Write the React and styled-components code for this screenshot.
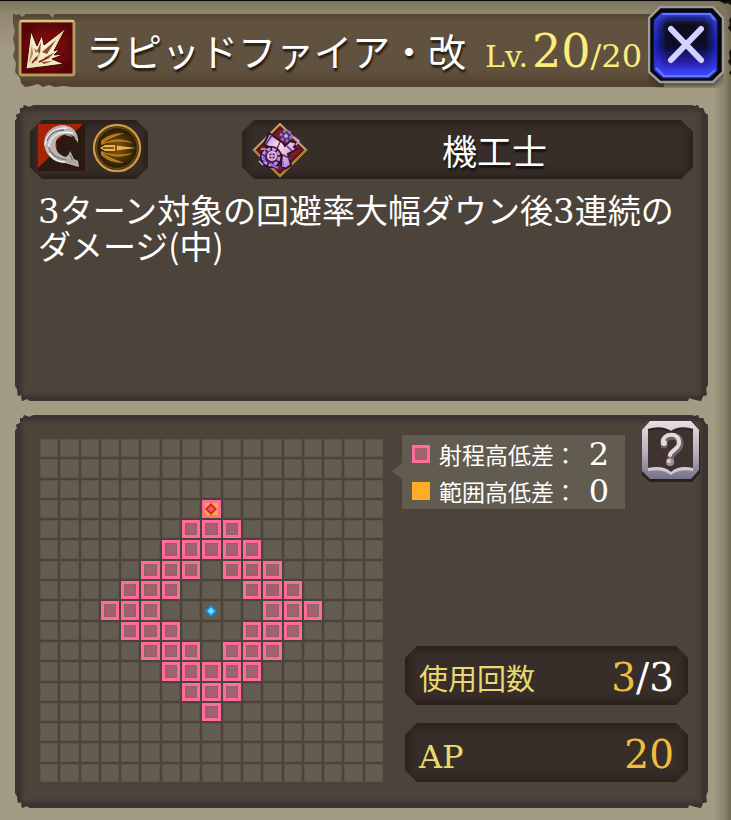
import styled, { createGlobalStyle } from "styled-components";

const GlobalStyle = createGlobalStyle`
  * {
    box-sizing: border-box;
  }
  body {
    margin: 0;
    background-color: #a39b83;
    font-family: "DejaVu Serif", "Noto Sans CJK JP", serif;
    color: #ffffff;
  }
  h1, h2, p, dl, dt, dd, ul {
    margin: 0;
    padding: 0;
    font-weight: normal;
  }
`;

const Page = styled.main`
  position: relative;
  display: flex;
  flex-direction: column;
  min-height: 100vh;
  padding-bottom: 12px;
  border-top: 1px solid #08070a;
  background: linear-gradient(
      to left,
      #6e664e 0,
      rgba(110, 102, 78, 0.4) 7px,
      transparent 18px
    ),
    linear-gradient(#7b725c 0, #918871 13px, #a39b83 50px);
`;

const TornEdge = styled.svg`
  position: absolute;
  top: 0;
  right: 0;
  width: 18px;
  height: 80px;
`;

const Header = styled.header`
  position: relative;
  display: flex;
  align-items: flex-start;
  padding: 5px 7px 0 13px;
  height: 104px;
`;

const TitleBar = styled.div`
  flex: 1;
  display: flex;
  align-items: center;
  height: 73px;
  margin-top: 8px;
  padding: 0 22px 6px 4px;
  background: linear-gradient(#53452f 0, #60523f 9px, #60523f 56px, #503f29 100%);
  clip-path: polygon(
    0 0, 4px 1px, 6px 0, 9px 3px, 13px 0, 36px 0, 40px 4px, 41px 0, 100% 0,
    100% 100%, 60px 100%, 50px 72px, 42px 73px, 36px 71px, 30px 73px, 25px 70px,
    18px 72px, 12px 73px, 8px 69px, 7px 64px, 2px 58px, 3px 49px, 0 42px,
    2px 34px, 0 25px, 2px 17px, 0 10px
  );
`;

const SkillIcon = styled.svg`
  flex: none;
  width: 60px;
  height: 60px;
`;

const SkillName = styled.h1`
  margin-left: 9px;
  padding-top: 4px;
  font-family: "Noto Sans CJK JP", sans-serif;
  font-size: 38px;
  line-height: 56px;
  white-space: nowrap;
  text-shadow: 1px 3px 2px #241c12;
`;

const Level = styled.p`
  margin-left: auto;
  padding-top: 12px;
  display: flex;
  align-items: baseline;
  font-size: 30px;
  line-height: 56px;
  color: #fdec7c;
  white-space: nowrap;
`;

const LevelNow = styled.strong`
  margin-left: 4px;
  font-size: 46px;
  font-weight: normal;
`;

const LevelMax = styled.span`
  font-size: 32px;
`;

const IconButton = styled.button`
  flex: none;
  width: ${(props) => props.$size}px;
  padding: 0;
  border: none;
  background: none;
  cursor: pointer;
  svg {
    display: block;
    width: 100%;
  }
`;

const CloseButton = styled(IconButton)`
  position: relative;
  margin-left: -16px;
`;

const Panel = styled.section`
  margin: 0 23px 14px 15px;
  background-color: #4c433a;
  box-shadow: inset 0 0 5px 3px #352f2d;
  border: solid #403336;
  border-width: 2px 3px;
  clip-path: polygon(
    0 16px, 2px 13px, 1px 10px, 5px 8px, 5px 3px, 8px 3px, 9px 0, 14px 2px, 19px 0,
    calc(100% - 18px) 0, calc(100% - 13px) 1px, calc(100% - 10px) 0,
    calc(100% - 9px) 3px, calc(100% - 5px) 3px, calc(100% - 3px) 8px, 100% 10px,
    100% calc(100% - 17px), calc(100% - 2px) calc(100% - 12px),
    calc(100% - 1px) calc(100% - 6px), calc(100% - 5px) calc(100% - 5px),
    calc(100% - 7px) 100%, calc(100% - 12px) calc(100% - 1px),
    calc(100% - 19px) calc(100% - 3px), calc(100% - 20px) 100%,
    15px 100%, 12px calc(100% - 2px), 7px 100%, 6px calc(100% - 6px),
    3px calc(100% - 5px), 2px calc(100% - 12px), 0 calc(100% - 15px)
  );
`;

const DetailPanel = styled(Panel)`
  min-height: 296px;
  padding: 13px 12px;
`;

const RangePanel = styled(Panel)`
  display: grid;
  grid-template-columns: minmax(0, 343fr) minmax(0, 299fr);
  column-gap: 19px;
  padding: 4px 4px 24px 22px;
  margin-bottom: 0;
`;

const PlateRow = styled.div`
  display: flex;
  justify-content: space-between;
`;

const Plate = styled.div`
  display: flex;
  align-items: center;
  height: 59px;
  background-color: #372e2a;
  box-shadow: inset 0 0 10px 3px #281d17;
  clip-path: polygon(
    12px 0, calc(100% - 12px) 0, 100% 12px, 100% calc(100% - 12px),
    calc(100% - 12px) 100%, 12px 100%, 0 calc(100% - 12px), 0 12px
  );
`;

const TypePlate = styled(Plate)`
  width: 118px;
  padding: 0 5px 4px 8px;
  justify-content: space-between;
`;

const JobPlate = styled(Plate)`
  width: 68%;
  padding-left: 10px;
`;

const JobName = styled.h2`
  flex: 1;
  padding-right: 12px;
  font-family: "Noto Sans CJK JP", sans-serif;
  font-size: 35px;
  line-height: 56px;
  text-align: center;
  text-shadow: 1px 3px 2px #15100d;
`;

const Description = styled.p`
  padding: 13px 0 0 8px;
  font-family: "Noto Sans CJK JP", sans-serif;
  font-size: 33px;
  line-height: 34px;
`;

const Digit = styled.span`
  font-family: "DejaVu Serif", serif;
  font-size: 34px;
  line-height: 34px;
`;

const RangeMap = styled.div`
  display: grid;
  grid-template-columns: repeat(17, minmax(0, 1fr));
  gap: 2px;
  align-content: start;
  padding-top: 18px;
`;

const cellFill = {
  none: "#635c50",
  range: "#a2616c",
  target: "#ffae24",
};

const Cell = styled.div`
  display: flex;
  align-items: center;
  justify-content: center;
  aspect-ratio: 1;
  background-color: ${(props) => cellFill[props.$kind]};
  border: ${(props) =>
    props.$kind === "none" ? "1px solid #5b5449" : "3px solid #ff6c9b"};
  box-shadow: ${(props) =>
    props.$kind === "range" ? "inset 0 0 0 1px #8b6464" : "none"};
  svg {
    flex: none;
    width: 12px;
    height: 12px;
  }
`;

const SideColumn = styled.div`
  display: flex;
  flex-direction: column;
  justify-content: space-between;
`;

const SideTop = styled.div`
  display: flex;
  justify-content: space-between;
  align-items: flex-start;
`;

const Legend = styled.ul`
  position: relative;
  width: 223px;
  margin-top: 14px;
  list-style: none;
  background-color: #625b4f;
  &::before {
    content: "";
    position: absolute;
    left: -10px;
    top: 28px;
    border: solid transparent;
    border-width: 8px 10px 8px 0;
    border-right-color: #625b4f;
  }
`;

const LegendRow = styled.li`
  display: flex;
  align-items: center;
  height: 37px;
  padding: 0 16px 0 10px;
  font-family: "Noto Sans CJK JP", sans-serif;
  font-size: 23px;
  line-height: 34px;
  white-space: nowrap;
`;

const Swatch = styled.span`
  flex: none;
  width: 18px;
  height: 18px;
  margin-right: 9px;
  background-color: ${(props) => cellFill[props.$kind]};
  border: 3px solid ${(props) => (props.$kind === "range" ? "#ff6c9b" : "#ffae24")};
`;

const LegendValue = styled.span`
  margin-left: auto;
  font-family: "DejaVu Serif", serif;
  font-size: 32px;
`;

const Stats = styled.dl`
  display: flex;
  flex-direction: column;
  gap: 18px;
  margin: 0 13px 0 3px;
`;

const StatPlate = styled(Plate)`
  justify-content: space-between;
  padding: 4px 14px 0;
`;

const StatLabel = styled.dt`
  padding-top: 4px;
  font-size: ${(props) => (props.$latin ? 32 : 29)}px;
  line-height: 56px;
  color: #e9d970;
`;

const StatValue = styled.dd`
  font-size: 39px;
  line-height: 56px;
  color: #f2bd3e;
`;

const StatMax = styled.span`
  color: #ffffff;
`;

const SIZE = 17;
const CENTER = 8;

const cells = Array.from({ length: SIZE * SIZE }, (_, i) => {
  const row = Math.floor(i / SIZE);
  const col = i % SIZE;
  const distance = Math.abs(row - CENTER) + Math.abs(col - CENTER);
  if (row === 3 && col === CENTER) return "target";
  return distance >= 3 && distance <= 5 ? "range" : "none";
});

const BurstIcon = () => (
  <SkillIcon viewBox="0 0 60 60" aria-hidden="true">
    <defs>
      <radialGradient id="burstBg">
        <stop offset="0.5" stopColor="#7b0b0b" />
        <stop offset="1" stopColor="#570407" />
      </radialGradient>
      <linearGradient id="burstRay" x1="0" y1="1" x2="1" y2="0">
        <stop offset="0" stopColor="#ead9a4" />
        <stop offset="0.6" stopColor="#fff4d7" />
        <stop offset="1" stopColor="#d9b879" />
      </linearGradient>
    </defs>
    <rect x="1" y="1" width="58" height="58" rx="4" fill="#4f3d20" />
    <rect x="3" y="3" width="54" height="54" rx="2" fill="url(#burstBg)" stroke="#b49b5e" strokeWidth="3" />
    <path d="M3 3H57" stroke="#e5d391" strokeWidth="1.5" />
    <path
      d="M9 51L14 13L20 28L25 17L27 27L49 10L37 33L43 31L37 37L48 36L35 41L47 46Z"
      fill="url(#burstRay)"
      stroke="#3d0506"
      strokeWidth="1"
    />
    <path d="M17 30L19 35L24 24L23 36ZM25 34L39 22L30 36ZM27 40L38 34L31 41ZM24 44L36 43L27 46Z" fill="#8a4a34" />
    <path d="M12 45L15 26L16 36ZM17 43L23 34L20 43Z" fill="#b58a60" />
    <path d="M15 45L20 39M22 44L30 40" stroke="#7b1710" strokeWidth="1.5" />
  </SkillIcon>
);

const CloseIcon = () => (
  <svg viewBox="0 0 76 82" aria-hidden="true">
    <defs>
      <linearGradient id="closeBlue" x1="0" y1="0" x2="0" y2="1">
        <stop offset="0" stopColor="#3644dd" />
        <stop offset="0.5" stopColor="#1b20b0" />
        <stop offset="1" stopColor="#4149ff" />
      </linearGradient>
      <linearGradient id="closeCore" x1="0" y1="0" x2="0" y2="1">
        <stop offset="0" stopColor="#11091b" />
        <stop offset="0.55" stopColor="#0c0926" />
        <stop offset="1" stopColor="#3129d5" />
      </linearGradient>
      <filter id="closeBlur">
        <feGaussianBlur stdDeviation="3" />
      </filter>
    </defs>
    <path d="M12 5H68L75 15V69L67 80H12L1 70V15Z" fill="#2b271d" filter="url(#closeBlur)" opacity=".8" />
    <path d="M12 1H65L75 12V66L65 76H12L1 66V12Z" fill="#08070c" stroke="#9a9c9e" strokeWidth="2.5" />
    <path d="M13 7H63L69 14V65L61 72H15L6 64V14Z" fill="url(#closeBlue)" stroke="#1d249c" />
    <rect x="13" y="13" width="50" height="49" rx="7" fill="url(#closeCore)" filter="url(#closeBlur)" />
    <path d="M14 8H62L67 14M8 62L16 70H60L67 64" stroke="#6478ff" strokeWidth="2" fill="none" />
    <path d="M23 23L53 54M53 23L23 54" stroke="#d0d2ff" strokeWidth="6" strokeLinecap="round" />
  </svg>
);

const SlashIcon = () => (
  <svg width="47" height="47" viewBox="0 0 47 47" aria-hidden="true">
    <path d="M0 0H47V47H0Z" fill="#2c1a12" />
    <path d="M0 0H45L0 44Z" fill="#a42405" />
    <path d="M18 17L28 9L40 12V28L30 30L20 32Z" fill="#2c1a12" />
    <path
      d="M39 14C30 8 21 10 18 17C16 25 20 31 28 33L31 30L32 27L36 35L40 37L41 43L27 39C15 39 7 30 6 20C6 8 15 1 26 1C35 2 41 9 40 19C37 13 32 10 27 11Z"
      fill="#b9b6b5"
    />
    <path d="M7 21C8 11 16 4 29 4M10 26C11 13 20 6 35 9M11 29C16 36 20 38 27 38" stroke="#f3f1ef" strokeWidth="1.5" fill="none" />
    <path d="M9 17C12 9 17 6 26 6M10 23C13 30 19 35 29 36M32 31L35 37" stroke="#77716d" strokeWidth="1.3" fill="none" />
    <path d="M27 34L38 37L40 41L29 38Z" fill="#a9a5a4" />
  </svg>
);

const BulletIcon = () => (
  <svg width="52" height="52" viewBox="0 0 52 52" aria-hidden="true">
    <defs>
      <radialGradient id="coin">
        <stop offset="0" stopColor="#8b5a0f" />
        <stop offset="0.5" stopColor="#4f3508" />
        <stop offset="1" stopColor="#1a1207" />
      </radialGradient>
    </defs>
    <circle cx="26" cy="26" r="25" fill="#30220e" />
    <circle cx="26" cy="26" r="23" fill="url(#coin)" stroke="#c8974a" strokeWidth="2.5" />
    <circle cx="26" cy="26" r="20.5" fill="none" stroke="#644819" strokeWidth="1.5" />
    <path
      d="M10 19C15 14 23 11 33 11C24 15 17 17 13 21C23 16 31 16 42 21C26 18 15 21 10 23ZM10 33C15 38 23 41 33 41C24 37 17 35 13 31C23 36 31 36 42 31C26 34 15 31 10 29Z"
      fill="#b47a22"
    />
    <path d="M9 26L14 23H25L28 24L45 26L28 28L25 29H14Z" fill="#f0b24a" />
    <path d="M12 26H23M25 22V30" stroke="#573708" strokeWidth="1.5" />
  </svg>
);

const MachinistIcon = () => (
  <svg width="56" height="56" viewBox="0 0 56 56" aria-hidden="true">
    <defs>
      <linearGradient id="gunMetal" x1="0" y1="0" x2="1" y2="1">
        <stop offset="0" stopColor="#a879e4" />
        <stop offset="0.4" stopColor="#ffdce9" />
        <stop offset="0.7" stopColor="#d8a2d5" />
        <stop offset="1" stopColor="#7f62e1" />
      </linearGradient>
    </defs>
    <path d="M28 2L54 28L28 54L2 28Z" fill="#67151d" stroke="#c4a46b" strokeWidth="2" />
    <path d="M28 6L50 28L28 50L6 28Z" fill="#7c1b22" stroke="#421018" />
    <path d="M2 28L28 54L54 28" fill="none" stroke="#a98334" strokeWidth="2" />
    <circle cx="34" cy="14" r="5" fill="#49346a" stroke="#8a6dd2" strokeWidth="3" strokeDasharray="3 2" />
    <circle cx="34" cy="14" r="2" fill="#c6a0e8" />
    <path d="M17 11L31 21L33 24L38 19L45 21L42 25L45 27L36 32L39 43L33 47L29 43L30 33L12 22Z" fill="url(#gunMetal)" stroke="#2d142e" strokeWidth="2" />
    <path d="M20 13L14 22M28 20L24 29M35 24L40 29M31 33L39 37" stroke="#55356e" strokeWidth="1.5" />
    <circle cx="19" cy="35" r="9" fill="#4c2052" stroke="#231124" strokeWidth="4" />
    <circle cx="19" cy="35" r="8" fill="none" stroke="#c08fe0" strokeWidth="3" strokeDasharray="4 1.5" />
    <circle cx="20" cy="34" r="4" fill="none" stroke="#f1b6dc" strokeWidth="2" />
    <path d="M16 34H24M20 30V38M9 27L14 27M11 43L7 39M42 15L47 19L44 23" stroke="#d5a3e6" strokeWidth="1.5" fill="none" />
    <path d="M18 42L26 46M10 33L13 40M31 39V45" stroke="#806dff" strokeWidth="2" />
  </svg>
);

const GuideIcon = () => (
  <svg viewBox="0 0 60 62" aria-hidden="true">
    <defs>
      <linearGradient id="guideFrame" x1="0" y1="0" x2="0" y2="1">
        <stop offset="0" stopColor="#e8dfe6" />
        <stop offset="0.55" stopColor="#b9adb9" />
        <stop offset="1" stopColor="#777089" />
      </linearGradient>
    </defs>
    <path d="M10 3H51L59 11V52L51 61H9L1 54V11Z" fill="#27221f" />
    <path d="M9 0H50L58 9V49L50 58H9L1 50V9Z" fill="url(#guideFrame)" />
    <path d="M7 9C16 6 24 7 30 11C36 7 43 6 52 9V48C43 46 35 48 30 53C25 48 17 46 7 48Z" fill="#40332f" />
    <path d="M7 9C16 6 24 7 30 11C36 7 43 6 52 9" fill="none" stroke="#2b2424" strokeWidth="2" />
    <path d="M7 47C17 45 25 46 30 51C35 46 43 45 52 47V50C42 48 35 50 30 54C25 50 17 48 7 50Z" fill="#d0c9d3" />
    <path d="M23 24C20 14 40 11 39 23C39 30 30 30 30 36" fill="none" stroke="#6e6468" strokeWidth="7" strokeLinecap="round" />
    <path d="M22 22C20 12 39 10 38 22C38 28 30 29 29 34" fill="none" stroke="#e2d8df" strokeWidth="4" strokeLinecap="round" />
    <circle cx="23" cy="22" r="3" fill="#e2d8df" />
    <circle cx="29" cy="41" r="4" fill="#9c9498" />
    <circle cx="28" cy="40" r="2" fill="#d9d1d6" />
  </svg>
);

const TargetMark = () => (
  <svg viewBox="0 0 14 14" aria-hidden="true">
    <path d="M7 0L14 7L7 14L0 7Z" fill="#c92731" />
    <path d="M7 3L11 7L7 11L3 7Z" fill="#f05755" />
  </svg>
);

const SelfMark = () => (
  <svg viewBox="0 0 14 14" aria-hidden="true">
    <path d="M7 0L14 7L7 14L0 7Z" fill="#168eef" />
    <path d="M7 3L11 7L7 11L3 7Z" fill="#70e4ff" />
  </svg>
);

export default function App() {
  return (
    <>
      <GlobalStyle />
      <Page>
        <TornEdge viewBox="0 0 18 80" aria-hidden="true">
          <path d="M6 0H18V4L14 2L12 3L8 1ZM18 16L16 19L17 23L15 27L18 31ZM18 48L16 51L17 57L15 61L18 65ZM18 69L16 72L18 74Z" fill="#151310" />
        </TornEdge>
        <Header>
          <TitleBar>
            <BurstIcon />
            <SkillName>ラピッドファイア・改</SkillName>
            <Level>
              Lv.<LevelNow>20</LevelNow>
              <LevelMax>/20</LevelMax>
            </Level>
          </TitleBar>
          <CloseButton type="button" $size={76} aria-label="閉じる">
            <CloseIcon />
          </CloseButton>
        </Header>
        <DetailPanel>
          <PlateRow>
            <TypePlate>
              <SlashIcon />
              <BulletIcon />
            </TypePlate>
            <JobPlate>
              <MachinistIcon />
              <JobName>機工士</JobName>
            </JobPlate>
          </PlateRow>
          <Description>
            <Digit>3</Digit>ターン対象の回避率大幅ダウン後<Digit>3</Digit>連続の
            <br />
            ダメージ(中)
          </Description>
        </DetailPanel>
        <RangePanel>
          <RangeMap>
            {cells.map((kind, i) => (
              <Cell key={i} $kind={kind}>
                {kind === "target" && <TargetMark />}
                {i === CENTER * SIZE + CENTER && <SelfMark />}
              </Cell>
            ))}
          </RangeMap>
          <SideColumn>
            <SideTop>
              <Legend>
                <LegendRow>
                  <Swatch $kind="range" />
                  射程高低差：<LegendValue>2</LegendValue>
                </LegendRow>
                <LegendRow>
                  <Swatch $kind="target" />
                  範囲高低差：<LegendValue>0</LegendValue>
                </LegendRow>
              </Legend>
              <IconButton type="button" $size={60} aria-label="ヘルプ">
                <GuideIcon />
              </IconButton>
            </SideTop>
            <Stats>
              <StatPlate>
                <StatLabel>使用回数</StatLabel>
                <StatValue>
                  3<StatMax>/3</StatMax>
                </StatValue>
              </StatPlate>
              <StatPlate>
                <StatLabel $latin>AP</StatLabel>
                <StatValue>20</StatValue>
              </StatPlate>
            </Stats>
          </SideColumn>
        </RangePanel>
      </Page>
    </>
  );
}
